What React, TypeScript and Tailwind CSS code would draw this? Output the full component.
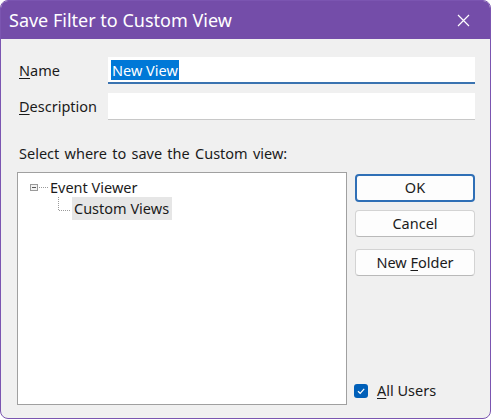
import React from "react";

function Btn({ children, def }: { children: React.ReactNode; def?: boolean }) {
  return (
    <div
      className={
        "w-[120px] rounded-[4px] bg-[#fdfdfd] flex items-center justify-center text-[14.5px] text-[#1b1b1b] " +
        (def ? "h-[28px] border-2 border-[#2f6fb6]" : "h-[27px] border border-[#d3d3d3] border-b-[#b9b9b9]")
      }
    >
      {children}
    </div>
  );
}

export default function App() {
  return (
    <div
      className="w-[491px] h-[419px] rounded-[8px] border border-[#7b55b1] overflow-hidden bg-[#f0f0f0] flex flex-col text-[#1b1b1b]"
      style={{ fontFamily: '"Noto Sans", "Open Sans", sans-serif' }}
    >
      <div className="h-[38px] shrink-0 bg-[#744da9] flex items-center pl-[8px] pr-[20px] text-white">
        <div className="text-[18px] leading-none flex-1">Save Filter to Custom View</div>
        <svg width="13" height="13" viewBox="0 0 13 13" className="mt-[1px]">
          <path d="M1 1 L12 12 M12 1 L1 12" stroke="white" strokeWidth="1.2" fill="none" />
        </svg>
      </div>
      <div className="flex-1 flex flex-col pl-[16px] pr-[15px]">
        <div className="flex items-center mt-[18px]">
          <div className="w-[91px] pl-[2px] text-[14.5px]">
            <span className="underline underline-offset-[2px]">N</span>ame
          </div>
          <div className="flex-1 h-[27px] bg-white border-b-2 border-[#3a73b0] flex items-center pl-[3px]">
            <span className="bg-[#0078d7] text-white text-[14.5px] leading-[20px] px-[1px]">New View</span>
          </div>
        </div>
        <div className="flex items-center mt-[9px]">
          <div className="w-[91px] pl-[2px] text-[14.5px]">
            <span className="underline underline-offset-[2px]">D</span>escription
          </div>
          <div className="flex-1 h-[27px] bg-white border-b border-[#c8c8c8]" />
        </div>
        <div className="mt-[23px] pl-[2px] text-[14.5px] leading-[20px] [word-spacing:1.5px]">
          Select where to save the Custom view:
        </div>
        <div className="flex mt-[9px] gap-[8px]">
          <div className="w-[330px] h-[233px] bg-white border border-[#a0a0a0] pt-[6px] pl-[12px]">
            <div className="flex items-center h-[18px]">
              <svg width="20" height="8" viewBox="0 0 20 8" className="shrink-0">
                <rect x="0.5" y="0.5" width="7" height="6" fill="#f2f2f2" stroke="#9a9a9a" />
                <path d="M2 3.5 H6" stroke="#555" />
                <path d="M9 3.5 H19" stroke="#9a9a9a" strokeDasharray="1 1" />
              </svg>
              <span className="text-[14.5px]">Event Viewer</span>
            </div>
            <div className="flex items-start h-[24px]">
              <svg width="14" height="16" viewBox="0 0 14 16" className="shrink-0 ml-[28px]">
                <path d="M0.5 0 V13.5 H13" stroke="#9a9a9a" strokeDasharray="1 1" fill="none" />
              </svg>
              <span className="bg-[#e6e6e6] text-[14.5px] leading-[23px] pl-[2px] pr-[3px]">Custom Views</span>
            </div>
          </div>
          <div className="flex flex-col flex-1 h-[233px] pt-[2px]">
            <Btn def>OK</Btn>
            <div className="mt-[8px]">
              <Btn>Cancel</Btn>
            </div>
            <div className="mt-[12px]">
              <Btn>
                <span>
                  New <span className="underline underline-offset-[2px]">F</span>older
                </span>
              </Btn>
            </div>
            <div className="flex-1" />
            <div className="flex items-center mb-[3px] ml-[-1px]">
              <div className="w-[14px] h-[14px] rounded-[3px] bg-[#005fb8] flex items-center justify-center">
                <svg width="10" height="10" viewBox="0 0 10 10">
                  <path d="M2 5.2 L4.2 7.3 L8.2 2.8" stroke="white" strokeWidth="1.2" fill="none" />
                </svg>
              </div>
              <span className="ml-[9px] text-[14.5px]">
                <span className="underline underline-offset-[2px]">A</span>ll Users
              </span>
            </div>
          </div>
        </div>
      </div>
    </div>
  );
}
